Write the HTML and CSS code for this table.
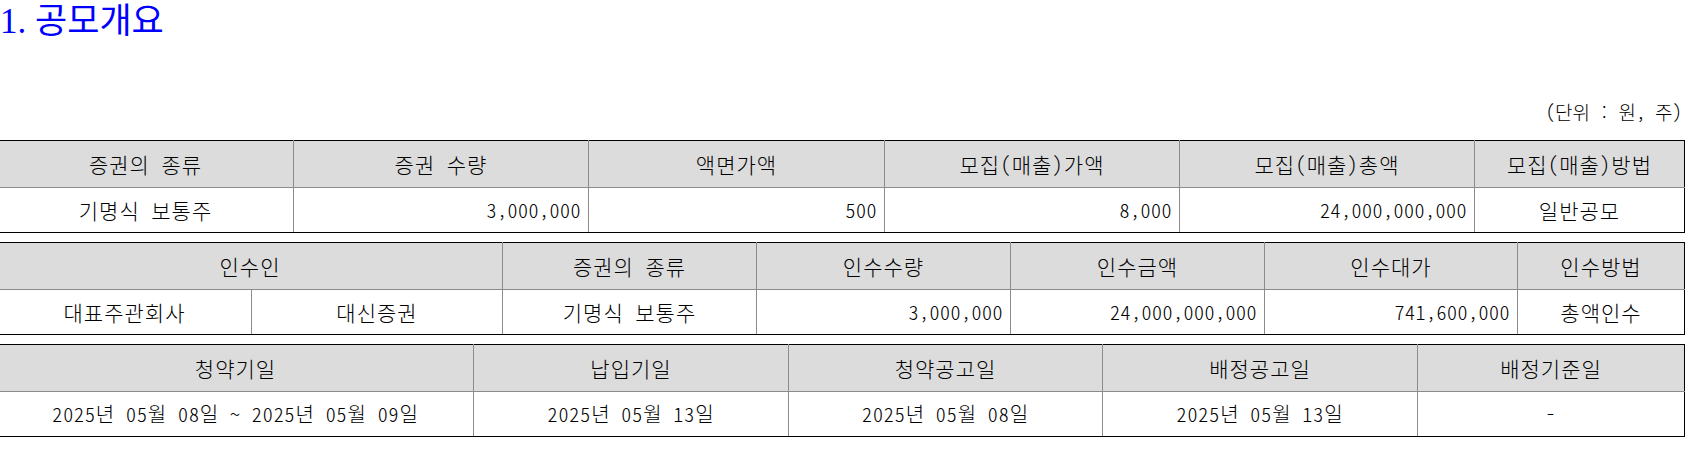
FILE: index.html
```html
<!DOCTYPE html>
<html lang="ko">
<head>
<meta charset="utf-8">
<title>공모개요</title>
<link rel="stylesheet" href="styles.css">
</head>
<body>
<h1 class="title">1. 공모개요</h1>
<p class="unit">(단위 : 원, 주)</p>

<table class="grid">
  <colgroup>
    <col style="width:296px"><col style="width:295px"><col style="width:296px"><col style="width:295px"><col style="width:295px"><col style="width:210px">
  </colgroup>
  <thead>
    <tr><th>증권의 종류</th><th>증권 수량</th><th>액면가액</th><th>모집(매출)가액</th><th>모집(매출)총액</th><th>모집(매출)방법</th></tr>
  </thead>
  <tbody>
    <tr><td>기명식 보통주</td><td class="num">3,000,000</td><td class="num">500</td><td class="num">8,000</td><td class="num">24,000,000,000</td><td>일반공모</td></tr>
  </tbody>
</table>

<table class="grid">
  <colgroup>
    <col style="width:254px"><col style="width:251px"><col style="width:254px"><col style="width:254px"><col style="width:254px"><col style="width:253px"><col style="width:167px">
  </colgroup>
  <thead>
    <tr><th colspan="2">인수인</th><th>증권의 종류</th><th>인수수량</th><th>인수금액</th><th>인수대가</th><th>인수방법</th></tr>
  </thead>
  <tbody>
    <tr><td>대표주관회사</td><td>대신증권</td><td>기명식 보통주</td><td class="num">3,000,000</td><td class="num">24,000,000,000</td><td class="num">741,600,000</td><td>총액인수</td></tr>
  </tbody>
</table>

<table class="grid">
  <colgroup>
    <col style="width:476px"><col style="width:315px"><col style="width:314px"><col style="width:315px"><col style="width:267px">
  </colgroup>
  <thead>
    <tr><th>청약기일</th><th>납입기일</th><th>청약공고일</th><th>배정공고일</th><th>배정기준일</th></tr>
  </thead>
  <tbody>
    <tr><td class="date">2025년 05월 08일 ~ 2025년 05월 09일</td><td class="date">2025년 05월 13일</td><td class="date">2025년 05월 08일</td><td class="date">2025년 05월 13일</td><td class="date">-</td></tr>
  </tbody>
</table>
</body>
</html>
```

FILE: styles.css
```css
html, body {
  margin: 0;
  padding: 0;
  background: #ffffff;
}

body {
  width: 1701px;
  overflow: hidden;
  font-family: "Noto Sans CJK KR", sans-serif;
  font-feature-settings: "hwid" 1;
  color: #000000;
}

.title {
  margin: 0;
  padding: 2px 0 0 0;
  height: 40px;
  font-family: "Liberation Serif", "Noto Sans CJK KR", serif;
  font-feature-settings: normal;
  font-weight: normal;
  font-size: 35px;
  line-height: 40px;
  color: #0000ff;
}

.unit {
  margin: 58px 0 0 0;
  padding-right: 19px;
  height: 24px;
  line-height: 24px;
  text-align: right;
  font-size: 19px;
  font-weight: 300;
}

.grid {
  margin: 16px 0 0 -3px;
  width: 1687px;
  table-layout: fixed;
  border-collapse: collapse;
  border: 1px solid #000000;
  font-size: 21px;
  font-weight: 300;
}

.grid + .grid {
  margin-top: 9px;
}

.grid th,
.grid td {
  border: 1px solid #8c8c8c;
  padding: 0 7px;
  text-align: center;
  font-weight: 300;
  letter-spacing: 1px;
  white-space: nowrap;
  line-height: 24px;
}

.grid th {
  height: 45.5px;
  background: #dcdcdc;
}

.grid td {
  height: 44.5px;
}

.grid tr > :first-child {
  border-left-color: #000000;
}

.grid tr > :last-child {
  border-right-color: #000000;
}

.grid thead th {
  border-top-color: #000000;
}

.grid tbody td {
  border-bottom-color: #000000;
}

.grid td.num {
  text-align: right;
  padding-right: 7px;
  font-size: 20px;
  letter-spacing: 0.5px;
}

.grid td.date {
  font-size: 20px;
  letter-spacing: 0.9px;
}
```
